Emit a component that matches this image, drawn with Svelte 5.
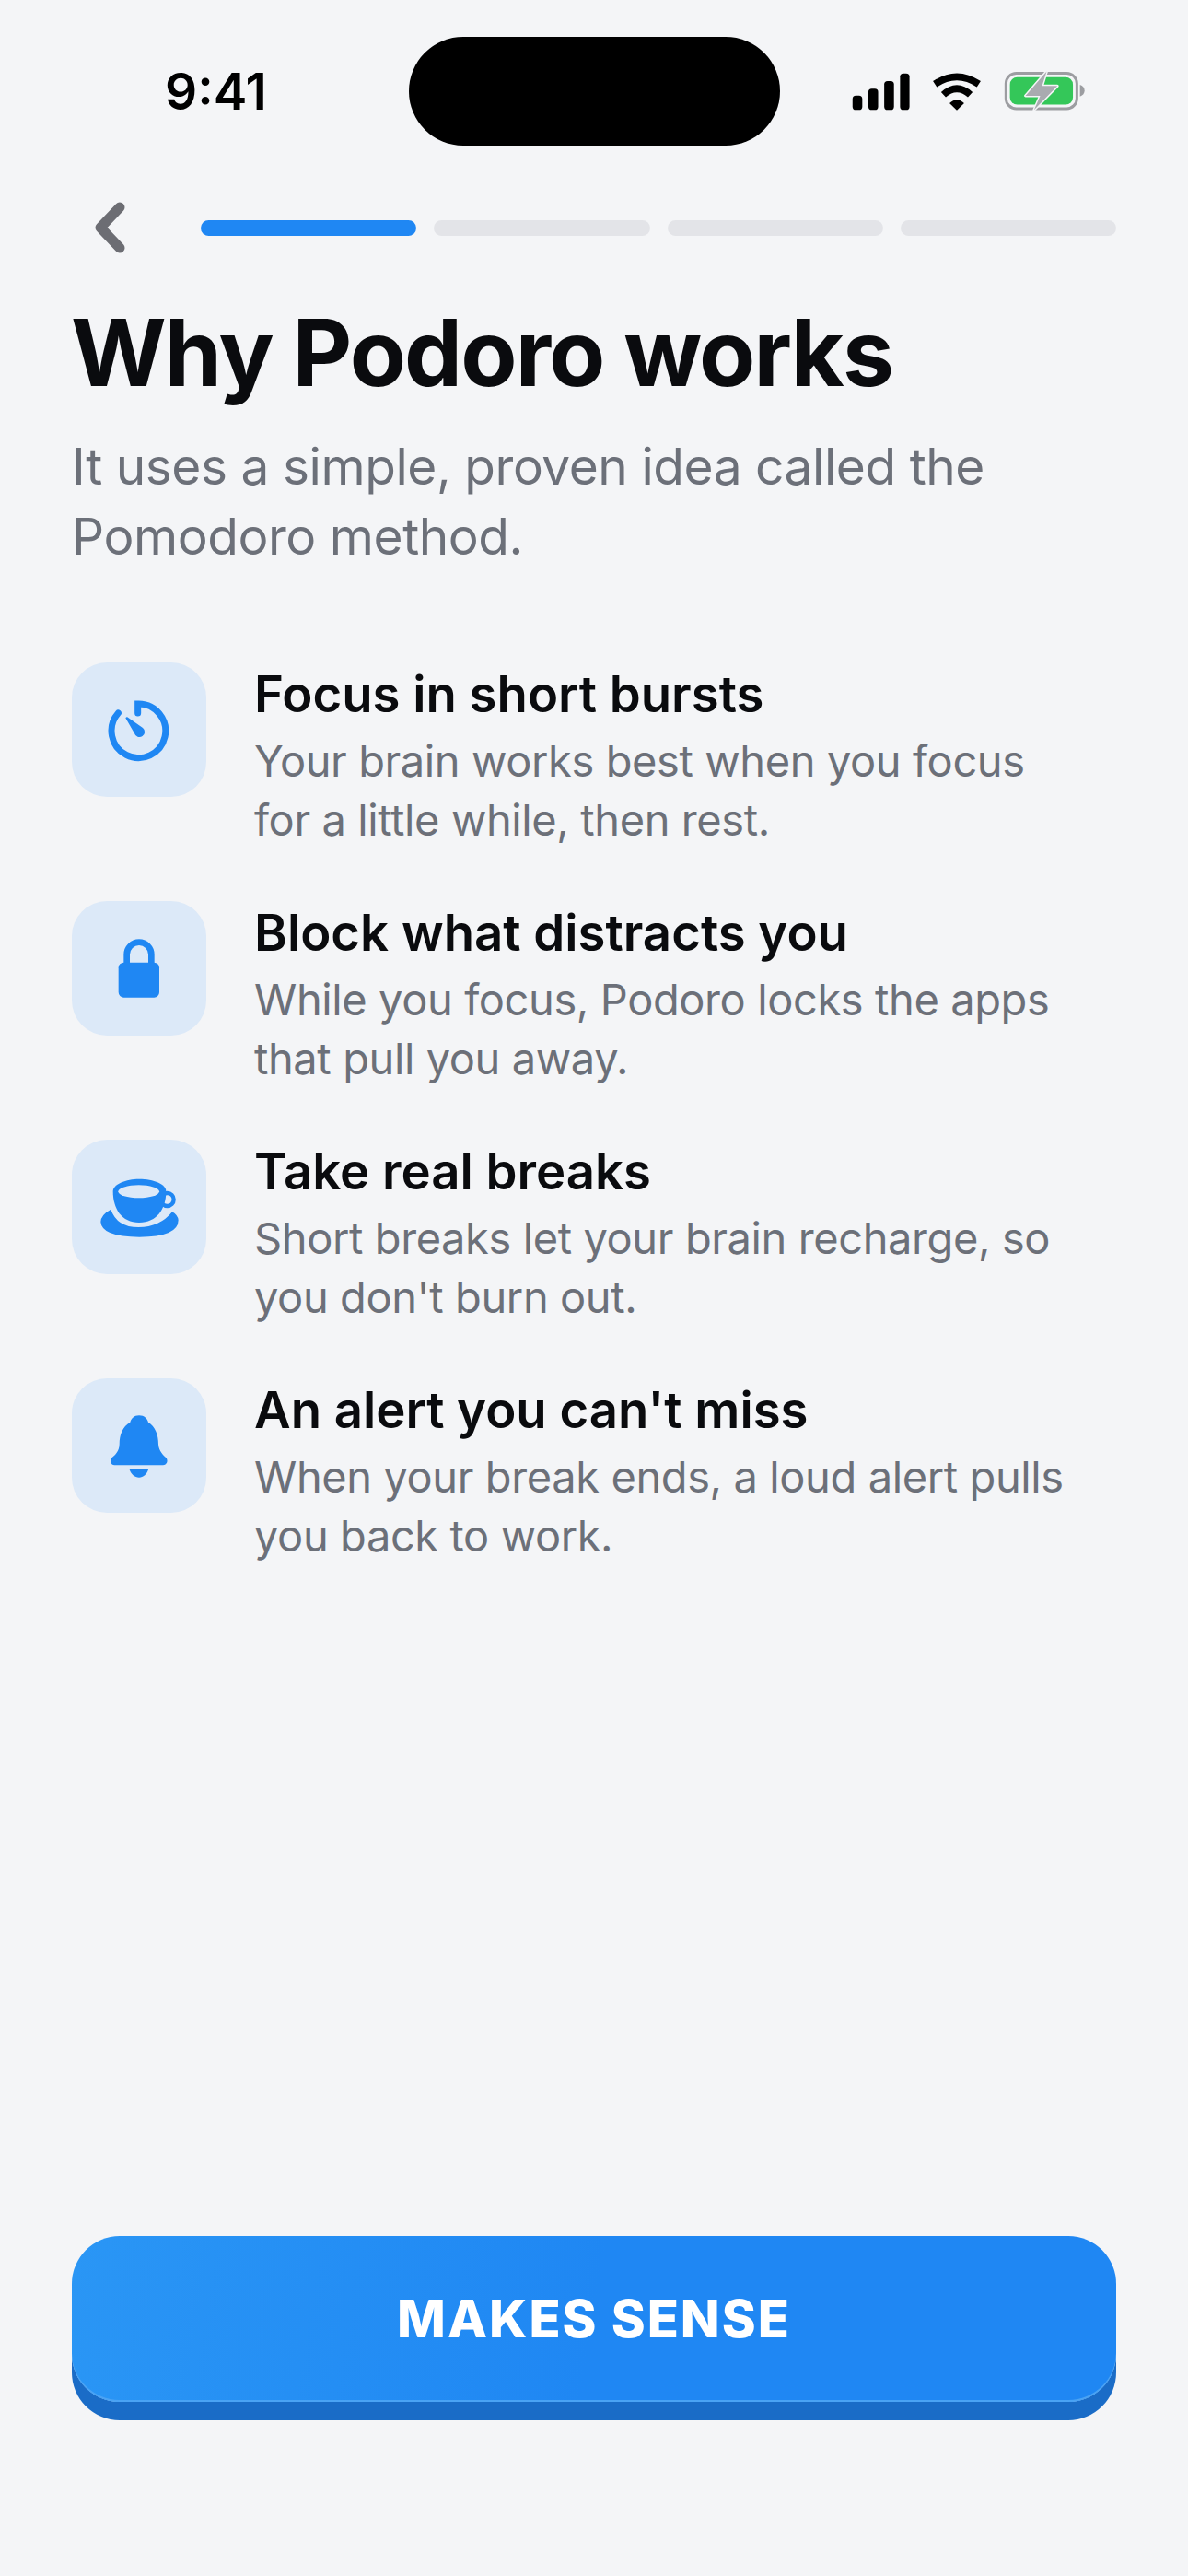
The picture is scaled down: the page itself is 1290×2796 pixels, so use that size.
<script>
  const steps = [true, false, false, false];

  const reasons = [
    { icon: 'timer', title: 'Focus in short bursts', lines: ['Your brain works best when you focus', 'for a little while, then rest.'] },
    { icon: 'lock', title: 'Block what distracts you', lines: ['While you focus, Podoro locks the apps', 'that pull you away.'] },
    { icon: 'cup', title: 'Take real breaks', lines: ["Short breaks let your brain recharge, so", "you don't burn out."] },
    { icon: 'bell', title: "An alert you can't miss", lines: ['When your break ends, a loud alert pulls', 'you back to work.'] }
  ];
</script>

<div class="page">
  <div class="status">
    <span class="time">9:41</span>
    <div class="island"></div>
    <div class="status-icons">
      <svg width="63" height="43" viewBox="133 85 190 130" fill="#000">
        <rect x="135" y="163" width="32" height="47" rx="11" />
        <rect x="187" y="140" width="32" height="70" rx="11" />
        <rect x="239" y="115" width="32" height="95" rx="11" />
        <rect x="291" y="90" width="31" height="120" rx="11" />
      </svg>
      <svg width="54" height="43" viewBox="393 85 162 130">
        <path d="M402 125Q474 77 546 125" fill="none" stroke="#000" stroke-width="23" />
        <path d="M430 160Q474 120 518 160" fill="none" stroke="#000" stroke-width="23" />
        <path d="M450 188Q474 165 498 188L474 211Z" fill="#000" />
      </svg>
      <svg width="89" height="46" viewBox="626 82 268 138">
        <rect x="633" y="92" width="232" height="116" rx="34" fill="none" stroke="#9c9da1" stroke-width="9" />
        <rect x="646" y="105" width="206" height="90" rx="24" fill="#34c759" />
        <path d="M875 130Q890 135 890 149Q890 163 875 168Z" fill="#9c9da1" />
        <path d="M766 86L697 166H745L725 212L801 134H751Z" fill="#a9abb0" stroke="#f4f5f7" stroke-width="9" stroke-linejoin="round" paint-order="stroke" />
      </svg>
    </div>
  </div>

  <div class="top-row">
    <button class="back" aria-label="Back">
      <svg width="34" height="56" viewBox="0 0 34 56">
        <path d="M28 6L7 28L28 50" fill="none" stroke="#6c6d73" stroke-width="11" stroke-linecap="round" stroke-linejoin="round" />
      </svg>
    </button>
    <div class="progress">
      {#each steps as done}
        <div class="step" class:done></div>
      {/each}
    </div>
  </div>

  <h1>Why Podoro works</h1>
  <p class="sub">It uses a simple, proven idea called the<br />Pomodoro method.</p>

  <div class="list">
    {#each reasons as r}
      <div class="item">
        <div class="tile">
          {#if r.icon === 'timer'}
            <svg width="146" height="146" viewBox="53 57 438 438">
              <path d="M268 222V192A88 88 0 1 1 204 222" fill="none" stroke="#1f87f3" stroke-width="21" stroke-linecap="round" />
              <path d="M228 238Q232 232 238 238L284 270A17 17 0 1 1 257 288Z" fill="#1f87f3" />
            </svg>
          {:else if r.icon === 'lock'}
            <svg width="146" height="146" viewBox="53 53 438 438">
              <path d="M232 256V227A40 40 0 0 1 312 227V256" fill="none" stroke="#1f87f3" stroke-width="20" />
              <rect x="205" y="253" width="133" height="114" rx="17" fill="#1f87f3" />
            </svg>
          {:else if r.icon === 'cup'}
            <svg width="146" height="146" viewBox="53 50 438 438">
              <path d="M180 277Q147 295 147 318Q150 367 273 367Q400 367 400 312Q398 295 380 285Q340 335 270 335Q200 335 180 277Z" fill="#1f87f3" />
              <circle cx="364" cy="245" r="21" fill="none" stroke="#1f87f3" stroke-width="13" />
              <path d="M187 218C187 195 230 178 272 178C320 178 360 195 360 218C360 275 330 320 272 320C215 320 187 275 187 218Z" fill="#1f87f3" />
              <ellipse cx="271" cy="219" rx="67" ry="21" fill="#dce9f8" />
            </svg>
          {:else}
            <svg width="146" height="146" viewBox="53 47 438 438">
              <path d="M272 168C290 168 298 178 302 190C325 205 335 230 335 262C337 285 350 295 360 306C368 316 362 330 350 330H192C180 330 175 316 183 306C195 295 207 285 208 262C208 230 218 205 243 190C247 178 255 168 272 168Z" fill="#1f87f3" />
              <path d="M240 342H303C298 360 285 370 272 370C258 370 245 360 240 342Z" fill="#1f87f3" />
            </svg>
          {/if}
        </div>
        <div class="copy">
          <div class="item-title">{r.title}</div>
          <div class="item-desc">{r.lines[0]}<br />{r.lines[1]}</div>
        </div>
      </div>
    {/each}
  </div>

  <button class="cta">MAKES SENSE</button>
</div>

<style>
  :global(body) {
    margin: 0;
    background: #f4f5f7;
  }

  .page {
    box-sizing: border-box;
    min-height: 2796px;
    padding: 40px 78px 189px;
    display: flex;
    flex-direction: column;
    background: #f4f5f7;
    font-family: Inter, 'Liberation Sans', sans-serif;
    color: #0a0b0e;
  }

  .status {
    margin: 0 -78px;
    display: grid;
    grid-template-columns: 1fr 403px 1fr;
    align-items: center;
  }

  .time {
    padding-left: 179px;
    font-size: 55px;
    font-weight: 600;
    color: #000;
  }

  .island {
    height: 118px;
    border-radius: 59px;
    background: #000;
  }

  .status-icons {
    padding-left: 78px;
    display: flex;
    align-items: center;
    gap: 24px;
  }

  .top-row {
    margin-top: 61px;
    display: flex;
    align-items: center;
  }

  .back {
    width: 140px;
    height: 56px;
    padding: 0 0 0 24px;
    border: none;
    background: none;
    text-align: left;
    flex-shrink: 0;
  }

  .progress {
    flex: 1;
    display: flex;
    gap: 19px;
  }

  .step {
    flex: 1;
    height: 17px;
    border-radius: 9px;
    background: #e3e4e8;
  }

  .step.done {
    background: #1f87f3;
  }

  h1 {
    margin: 47px 0 0 -1px;
    font-size: 100px;
    line-height: 122px;
    font-weight: 700;
    letter-spacing: -1.9px;
  }

  .sub {
    margin: 24px 0 0;
    font-size: 55px;
    line-height: 76px;
    letter-spacing: -0.45px;
    color: #6c7079;
  }

  .list {
    margin-top: 99px;
    display: flex;
    flex-direction: column;
    gap: 113px;
  }

  .item {
    display: flex;
    gap: 52px;
    height: 146px;
  }

  .tile {
    width: 146px;
    height: 146px;
    flex-shrink: 0;
    border-radius: 38px;
    background: #dce9f8;
  }

  .tile svg {
    display: block;
  }

  .item-title {
    font-size: 54.5px;
    line-height: 82px;
    font-weight: 600;
    margin-top: -7px;
  }

  .item-desc {
    font-size: 47px;
    line-height: 64px;
    letter-spacing: -0.4px;
    color: #6c7079;
  }

  .cta {
    margin-top: auto;
    height: 180px;
    border: none;
    border-radius: 52px;
    background: linear-gradient(100deg, #2a96f5 0%, #1f87f3 50%);
    box-shadow: 0 20px 0 #1a6cc7, inset 0 -2px 0 #4aa3f4;
    color: #fff;
    font-family: Inter, 'Liberation Sans', sans-serif;
    font-size: 56px;
    font-weight: 800;
    letter-spacing: 2px;
  }
</style>
